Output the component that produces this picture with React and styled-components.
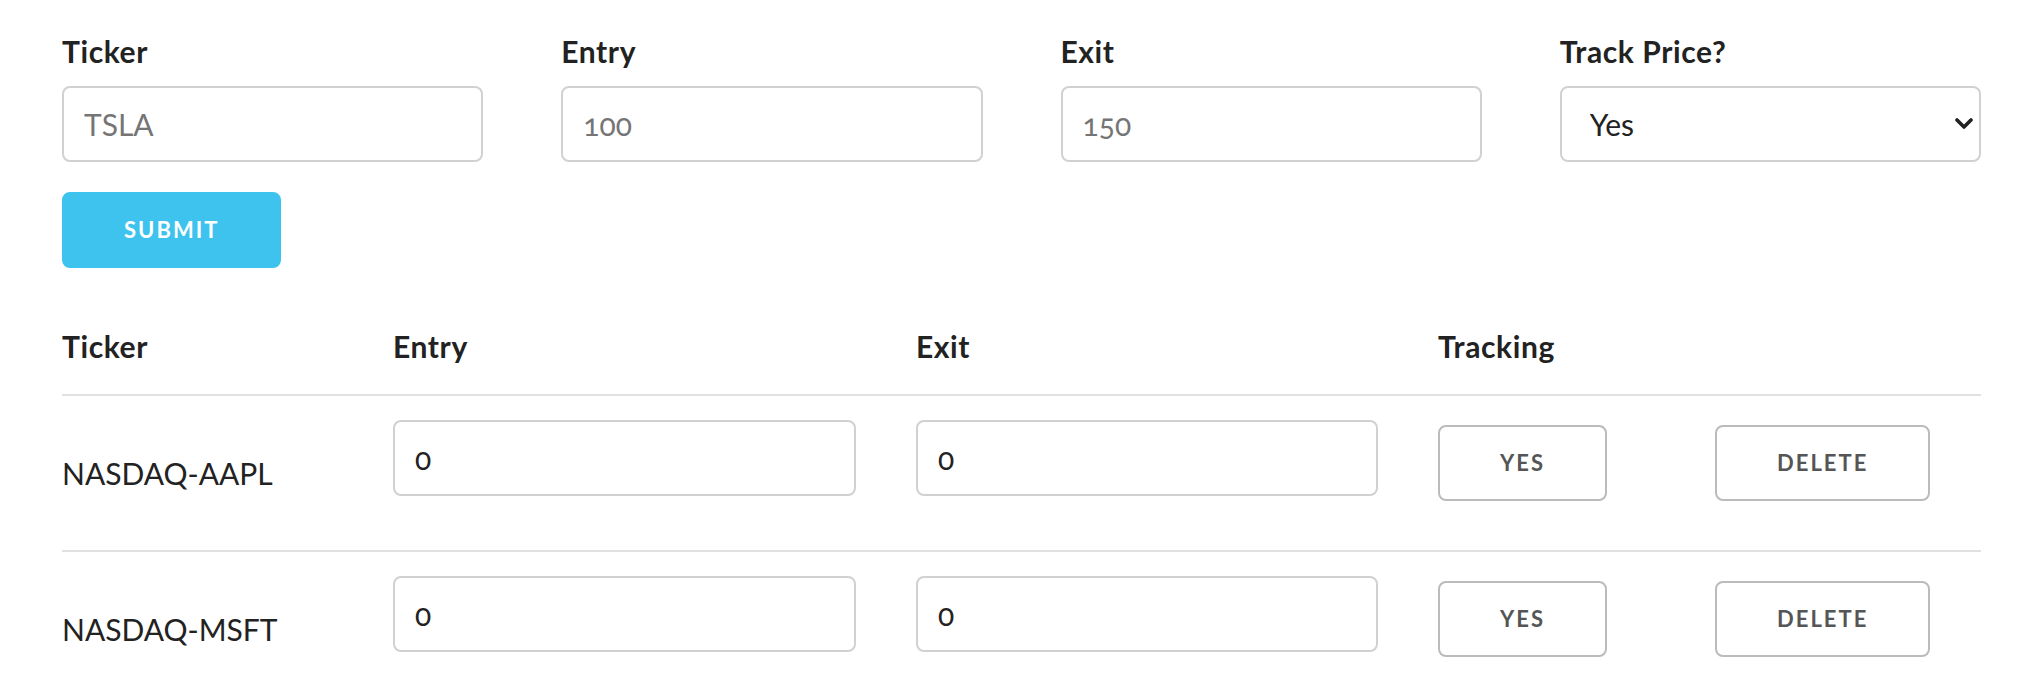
import { useState } from 'react';
import styled, { createGlobalStyle } from 'styled-components';

const GlobalStyle = createGlobalStyle`
    html, body {
        margin: 0;
        padding: 0;
        background: #fff;
    }

    body {
        font-family: Lato, "Open Sans", sans-serif;
        font-size: 30px;
        line-height: 1.6;
        font-weight: 400;
        color: #222;
        font-variant-numeric: oldstyle-nums;
    }
`;

const Page = styled.div`
    width: 1919px;
    padding: 27px 0 0 62px;
`;

const FormGrid = styled.div`
    display: grid;
    grid-template-columns: repeat(4, 1fr);
    column-gap: 78px;
`;

const Field = styled.div`
    display: flex;
    flex-direction: column;
`;

const Label = styled.label`
    display: block;
    font-weight: 700;
    letter-spacing: 0.6px;
    margin-bottom: 11px;
`;

const TextInput = styled.input`
    box-sizing: border-box;
    width: 100%;
    height: 76px;
    padding: 12px 20px;
    margin: 0 0 30px;
    border: 2px solid #d1d1d1;
    border-radius: 8px;
    background: #fff;
    font-family: inherit;
    font-size: 30px;
    color: #222;
    font-variant-numeric: oldstyle-nums;
    outline: none;

    &::placeholder {
        color: #757575;
    }
`;

const SelectWrap = styled.div`
    position: relative;

    svg {
        position: absolute;
        right: 7px;
        top: 32px;
        pointer-events: none;
    }
`;

const Select = styled.select`
    appearance: none;
    box-sizing: border-box;
    width: 100%;
    height: 76px;
    padding: 0 40px 0 28px;
    margin: 0 0 30px;
    border: 2px solid #d1d1d1;
    border-radius: 8px;
    background: #fff;
    font-family: inherit;
    font-size: 30px;
    color: #222;
    outline: none;
`;

const Button = styled.button`
    box-sizing: border-box;
    height: 76px;
    padding: 0 60px;
    margin: 0 0 ${p => (p.$primary ? '30px' : '20px')};
    border: 2px solid ${p => (p.$primary ? '#3ec3ee' : '#bbb')};
    border-radius: 8px;
    background: ${p => (p.$primary ? '#3ec3ee' : 'transparent')};
    color: ${p => (p.$primary ? '#fff' : '#555')};
    font-family: inherit;
    font-size: 22px;
    font-weight: 700;
    letter-spacing: 2px;
    text-transform: uppercase;
    line-height: 72px;
    cursor: pointer;
    display: block;
`;

const Table = styled.table`
    width: 1919px;
    border-collapse: collapse;
    border-spacing: 0;
    table-layout: fixed;
`;

const Cell = styled.td`
    padding: 24px 30px;
    text-align: left;
    vertical-align: middle;
    border-bottom: 2px solid #e1e1e1;

    &:first-child {
        padding-left: 0;
    }

    &:last-child {
        padding-right: 0;
    }
`;

const HeadCell = styled(Cell).attrs({ as: 'th' })`
    font-weight: 700;
    letter-spacing: 0.6px;
`;

const rows = [
    { ticker: 'NASDAQ-AAPL', entry: '0', exit: '0', tracking: true },
    { ticker: 'NASDAQ-MSFT', entry: '0', exit: '0', tracking: true },
];

function Chevron() {
    return (
        <svg width="20" height="12" viewBox="0 0 20 12">
            <polyline points="3,2 10,9 17,2" fill="none" stroke="#222" strokeWidth="3.6" strokeLinecap="round" strokeLinejoin="round" />
        </svg>
    );
}

function App() {
    const [track, setTrack] = useState('yes');

    return (
        <Page>
            <GlobalStyle />
            <FormGrid>
                <Field>
                    <Label>Ticker</Label>
                    <TextInput type="text" placeholder="TSLA" />
                </Field>
                <Field>
                    <Label>Entry</Label>
                    <TextInput type="text" placeholder="100" />
                </Field>
                <Field>
                    <Label>Exit</Label>
                    <TextInput type="text" placeholder="150" />
                </Field>
                <Field>
                    <Label>Track Price?</Label>
                    <SelectWrap>
                        <Select value={track} onChange={e => setTrack(e.target.value)}>
                            <option value="yes">Yes</option>
                            <option value="no">No</option>
                        </Select>
                        <Chevron />
                    </SelectWrap>
                </Field>
            </FormGrid>
            <Button $primary type="submit">Submit</Button>

            <Table>
                <colgroup>
                    <col style={{ width: 301 }} />
                    <col style={{ width: 523 }} />
                    <col style={{ width: 522 }} />
                    <col style={{ width: 277 }} />
                    <col style={{ width: 296 }} />
                </colgroup>
                <thead>
                    <tr>
                        <HeadCell>Ticker</HeadCell>
                        <HeadCell>Entry</HeadCell>
                        <HeadCell>Exit</HeadCell>
                        <HeadCell>Tracking</HeadCell>
                        <HeadCell></HeadCell>
                    </tr>
                </thead>
                <tbody>
                    {rows.map(row => (
                        <tr key={row.ticker}>
                            <Cell>{row.ticker}</Cell>
                            <Cell>
                                <TextInput type="text" defaultValue={row.entry} />
                            </Cell>
                            <Cell>
                                <TextInput type="text" defaultValue={row.exit} />
                            </Cell>
                            <Cell>
                                <Button>{row.tracking ? 'Yes' : 'No'}</Button>
                            </Cell>
                            <Cell>
                                <Button>Delete</Button>
                            </Cell>
                        </tr>
                    ))}
                </tbody>
            </Table>
        </Page>
    );
}

export default App;
